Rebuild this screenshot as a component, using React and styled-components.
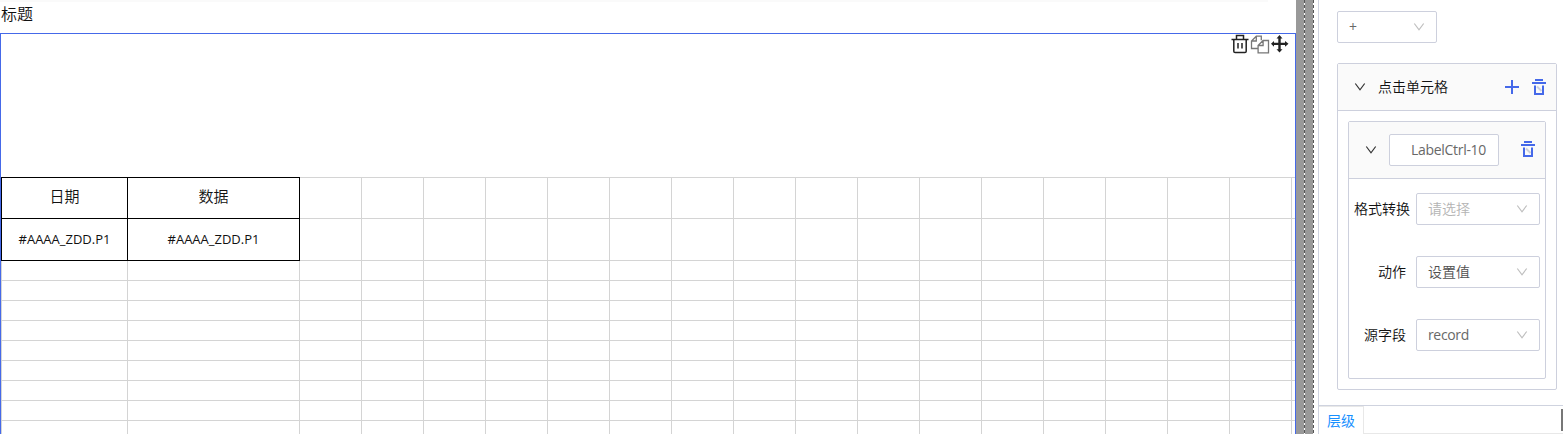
import React from "react";
import styled, { createGlobalStyle } from "styled-components";

const Global = createGlobalStyle`
  *{box-sizing:border-box}
  html,body{margin:0;padding:0;height:434px;overflow:hidden;background:#fff}
  body{font-family:"Open Sans","Noto Sans CJK SC",sans-serif;font-size:14px;font-weight:350;color:#111}
  #root{height:434px}
`;
const Page = styled.div`display:flex;width:1563px;height:434px;overflow:hidden;`;
const Designer = styled.main`width:1296px;height:434px;flex:none;display:flex;flex-direction:column;overflow:hidden;`;
const TopStrip = styled.div`width:1268px;height:2px;flex:none;background:#fafafa;`;
const Title = styled.div`height:31px;flex:none;padding-left:1px;font-size:16px;line-height:25px;color:#111;`;
const Canvas = styled.section`
  height:401px;flex:none;border:1px solid #4569e9;border-bottom:0;overflow:hidden;
`;
const CanvasTools = styled.div`height:143px;display:flex;justify-content:flex-end;padding:0 6px 0 0;
  svg{display:block;flex:none}`;
const Sheet = styled.table`
  border-collapse:collapse;table-layout:fixed;width:1353px;
  td{border:1px solid #d4d4d4;padding:0;text-align:center;}
`;
const Row = styled.tr`height:${p => p.$h}px;`;
const Cell = styled.td`
  && {border-color:${p => (p.$filled ? "#000" : "#d4d4d4")};padding-bottom:${p => (p.$filled ? (p.$head ? 5 : 2) : 0)}px;}
  font-size:${p => (p.$head ? 15 : 13)}px;font-weight:${p => (p.$head ? 350 : 400)};line-height:20px;color:#111;
`;
const Splitter = styled.div`width:22px;flex:none;display:flex;`;
const Rail = styled.div`
  width:9px;background:
  repeating-linear-gradient(to bottom,#555 0 3px,#fff 3px 5px) right top / 1px 100% no-repeat, #999;
`;
const Side = styled.aside`width:245px;flex:none;border-left:1px solid #cfd3df;display:flex;flex-direction:column;`;
const Form = styled.div`height:405px;flex:none;padding:11px 6px 0 18px;`;
const Select = styled.div`
  width:${p => p.$w}px;height:32px;flex:none;border:1px solid #cdd0dd;border-radius:2px;background:#fff;
  display:flex;align-items:center;justify-content:space-between;padding:0 11px;
  line-height:30px;color:${p => (p.$muted ? "#b4b4b4" : "#505050")};
`;
const Value = styled.span`height:30px;font-weight:${p => (p.$latin ? 400 : 350)};letter-spacing:${p => (p.$latin ? "-.35px" : "0")};
  color:${p => (p.$latin ? "#686868" : "inherit")};`;
const Panel = styled.div`margin-top:20px;width:220px;height:327px;border:1px solid #cdd0dd;border-radius:2px;`;
const PanelHead = styled.div`height:47px;background:#fafafa;border-bottom:1px solid #cdd0dd;display:flex;align-items:center;padding:0 10px 0 16px;`;
const PanelTitle = styled.span`margin-left:12px;padding-bottom:2px;flex:1;color:#111;`;
const Actions = styled.div`display:flex;gap:12px;svg{display:block}`;
const Inner = styled.div`margin:10px 0 0 10px;width:198px;height:258px;border:1px solid #cdd0dd;border-radius:2px;`;
const InnerHead = styled.div`height:57px;background:#fafafa;border-bottom:1px solid #cdd0dd;display:flex;align-items:center;padding:0 10px 0 16px;
  svg:last-child{margin:-2px 0 0 auto}`;
const NameInput = styled.div`width:110px;height:32px;margin-left:12px;border:1px solid #cdd0dd;border-radius:2px;background:#fff;padding-left:21px;line-height:30px;font-weight:400;letter-spacing:-.3px;color:#686868;white-space:nowrap;`;
const Fields = styled.div`padding:14px 5px 0 0;display:flex;flex-direction:column;gap:31px;`;
const Field = styled.div`display:flex;justify-content:flex-end;align-items:center;`;
const Label = styled.label`margin-right:${p => p.$gap || 10}px;padding-bottom:2px;white-space:nowrap;color:#111;`;
const Tabs = styled.div`height:29px;border-top:1px solid #cfd3df;display:flex;`;
const Tab = styled.div`width:45px;height:28px;border:1px solid #e8e8e8;border-width:1px 1px 0 0;text-align:center;line-height:27px;color:#1890ff;font-weight:400;`;
const TabRest = styled.div`flex:1;border-bottom:1px solid #e8e8e8;display:flex;justify-content:flex-end;align-items:flex-start;padding-top:3px;`;
const ScrollMark = styled.i`width:2px;height:22px;background:#777;`;

const Chevron = ({ color = "#333" }) => (
  <svg width="12" height="12" viewBox="0 0 12 12" fill="none" stroke={color} strokeWidth="1.2"><path d="M1.3 2.5 6 8.8l4.7-6.3" /></svg>
);
const Plus = () => <svg width="16" height="18" viewBox="0 0 16 18" stroke="#4569e9" strokeWidth="2"><path d="M1 9h14M8 2v14" /></svg>;
const Bin = () => (
  <svg width="14" height="18" viewBox="0 0 14 18" fill="none">
    <path d="M3 2h8M0 5h14" stroke="#4569e9" strokeWidth="2" />
    <path d="M3 7.5V16h8V7.5" stroke="#4569e9" strokeWidth="2" />
    <path d="m5 8.5 4.5 4.5" stroke="#ccd0dc" strokeWidth="2" />
  </svg>
);
const Trash = () => (
  <svg width="18" height="20" viewBox="0 0 18 20" fill="none" stroke="#222" strokeWidth="1.5">
    <path d="M.5 5.5h17M5.5 5V1.5h7V5M2.8 6v11.2c0 .9.5 1.3 1.3 1.3h9.8c.8 0 1.3-.4 1.3-1.3V6M7 9v5.5M11 9v5.5" />
  </svg>
);
const Copy = () => (
  <svg width="22" height="20" viewBox="0 0 22 20" fill="none" stroke="#777" strokeWidth="1.3">
    <path d="M8.8 14.5H2.5V7l4.8-4.8h5v4M7.3 2.2V7H2.5M9.1 11.5l5-5h5.4v12.3H9.1zM14.1 6.5v5h-5" />
  </svg>
);
const Move = () => (
  <svg width="18" height="20" viewBox="0 0 18 20" fill="#222">
    <path d="M8.5 1 11.5 4.5H9.7v4.2H14V7l3.5 2.8-3.5 3v-1.7H9.7v4.2h1.8l-3 3.2-3-3.2h1.8v-4.2H3v1.7l-3-3L3 7v1.7h4.3V4.5H5.5z" />
  </svg>
);

const widths = [126, 172, ...Array(17).fill(62)];
const data = [["日期", "数据"], ["#AAAA_ZDD.P1", "#AAAA_ZDD.P1"], ...Array(9).fill([])];
const heights = [41, 42, ...Array(9).fill(20)];
const fields = [
  { label: "格式转换", value: "请选择", muted: true, gap: 6 },
  { label: "动作", value: "设置值" },
  { label: "源字段", value: "record", latin: true },
];

export default function App() {
  return (
    <>
      <Global />
      <Page>
        <Designer>
          <TopStrip />
          <Title>标题</Title>
          <Canvas>
            <CanvasTools><Trash /><Copy /><Move /></CanvasTools>
            <Sheet>
              <colgroup>{widths.map((w, i) => <col key={i} width={w} />)}</colgroup>
              <tbody>
                {data.map((r, y) => (
                  <Row key={y} $h={heights[y]}>
                    {widths.map((_, x) => <Cell key={x} $filled={y < 2 && x < 2} $head={y === 0}>{r[x]}</Cell>)}
                  </Row>
                ))}
              </tbody>
            </Sheet>
          </Canvas>
        </Designer>
        <Splitter><Rail /><Rail /></Splitter>
        <Side>
          <Form>
            <Select $w={100}><Value $latin>+</Value><Chevron color="#bfbfbf" /></Select>
            <Panel>
              <PanelHead>
                <Chevron /><PanelTitle>点击单元格</PanelTitle>
                <Actions><Plus /><Bin /></Actions>
              </PanelHead>
              <Inner>
                <InnerHead><Chevron /><NameInput>LabelCtrl-10</NameInput><Bin /></InnerHead>
                <Fields>
                  {fields.map(f => (
                    <Field key={f.label}>
                      <Label $gap={f.gap}>{f.label}</Label>
                      <Select $w={124} $muted={f.muted}><Value $latin={f.latin}>{f.value}</Value><Chevron color="#bfbfbf" /></Select>
                    </Field>
                  ))}
                </Fields>
              </Inner>
            </Panel>
          </Form>
          <Tabs><Tab>层级</Tab><TabRest><ScrollMark /></TabRest></Tabs>
        </Side>
      </Page>
    </>
  );
}
